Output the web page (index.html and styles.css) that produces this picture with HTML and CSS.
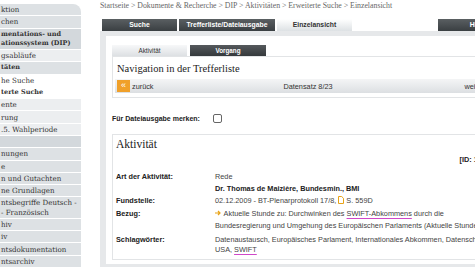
FILE: index.html
```html
<!DOCTYPE html>
<html lang="de">

<head>
    <meta charset="UTF-8">
    <meta name="viewport" content="width=device-width, initial-scale=1.0">
    <title>DIP - Einzelansicht</title>
    <link rel="stylesheet" href="styles.css">
</head>

<body>
    <div class="page">

        <!-- sidebar -->
        <ul class="sidenav">
            <li class="grey">ktion</li>
            <li class="grey">chen</li>
            <li class="dark bold">mentations- und<br>ationssystem (DIP)</li>
            <li class="light">gsabläufe</li>
            <li class="grey bold">täten</li>
            <li class="white">he Suche</li>
            <li class="white bold">terte Suche</li>
            <li class="light">ente</li>
            <li class="light">rung</li>
            <li class="light">.5. Wahlperiode</li>
            <li class="dark">&nbsp;</li>
            <li class="grey">nungen</li>
            <li class="grey">e</li>
            <li class="grey">n und Gutachten</li>
            <li class="grey">ne Grundlagen</li>
            <li class="grey">ntsbegriffe Deutsch -<br>- Französisch</li>
            <li class="grey">hiv</li>
            <li class="grey">iv</li>
            <li class="grey">ntsdokumentation</li>
            <li class="grey">ntsarchiv</li>
        </ul>

        <!-- main -->
        <div class="main">
            <div class="crumbs">Startseite &gt; Dokumente &amp; Recherche &gt; DIP &gt; Aktivitäten &gt; Erweiterte Suche &gt; Einzelansicht</div>

            <div class="tabs">
                <a class="tab tab-dark tab-suche">Suche</a>
                <a class="tab tab-dark tab-treffer">Trefferliste/Dateiausgabe</a>
                <a class="tab tab-light tab-einzel">Einzelansicht</a>
                <a class="tab tab-dark tab-hilfe">Hilfe</a>
            </div>

            <div class="panel">
                <div class="panel-inner">

                    <div class="subtabs">
                        <a class="subtab subtab-light">Aktivität</a>
                        <a class="subtab subtab-dark">Vorgang</a>
                    </div>

                    <div class="navbox">
                        <h2>Navigation in der Trefferliste</h2>
                        <div class="navbar">
                            <span class="nav-back"><span class="arrow-btn">«</span>zurück</span>
                            <span class="nav-count">Datensatz 8/23</span>
                            <span class="nav-next">weiter<span class="arrow-btn">»</span></span>
                        </div>
                    </div>

                    <div class="merken">
                        <label for="merken">Für Dateiausgabe merken:</label>
                        <span class="checkbox" id="merken"></span>
                    </div>

                    <div class="detail">
                        <h2>Aktivität</h2>
                        <div class="detail-id">[ID: 17-23582]</div>
                        <div class="fields">
                            <div class="label">Art der Aktivität:</div>
                            <div class="value">Rede<br><b>Dr. Thomas de Maizière, Bundesmin., BMI</b></div>

                            <div class="label">Fundstelle:</div>
                            <div class="value">02.12.2009 - BT-Plenarprotokoll 17/8,
                                <svg class="doc-icon" width="6" height="8" viewBox="0 0 6 8"><path d="M0.5 0.5h3.2l1.8 1.8v5.2h-5z" fill="#fff" stroke="#e8a317" stroke-width="1"/></svg>
                                S. 559D</div>

                            <div class="label">Bezug:</div>
                            <div class="value value-bezug">
                                <svg class="go-icon" width="6" height="6" viewBox="0 0 6 6"><path d="M0 3h5M3 1l2 2-2 2" fill="none" stroke="#e8a317" stroke-width="1.2"/></svg>
                                Aktuelle Stunde zu: Durchwinken des <span class="hit">SWIFT-Abkommens</span> durch die Bundesregierung und Umgehung des Europäischen Parlaments (Aktuelle Stunde)</div>

                            <div class="label">Schlagwörter:</div>
                            <div class="value value-tight">Datenaustausch, Europäisches Parlament, Internationales Abkommen, Datenschutz, USA, <span class="hit">SWIFT</span></div>
                        </div>
                    </div>

                </div>
            </div>
        </div>
    </div>
</body>

</html>
```

FILE: styles.css
```css
body {
    margin: 0;
    background: #ffffff;
    overflow: hidden;
    color: #444;
}

.page {
    display: flex;
    align-items: flex-start;
}

/* sidebar */
.sidenav {
    list-style: none;
    margin: 4px 0 0 0;
    padding: 0;
    width: 81px;
    flex-shrink: 0;
    border-top-right-radius: 8px;
    overflow: hidden;
    font-family: "DejaVu Serif", serif;
    font-size: 7.1px;
    color: #333;
}

.sidenav li {
    line-height: 9.2px;
    height: 9.2px;
    padding: 1.05px 0 1.05px 1px;
    border-bottom: 1px solid #ffffff;
    white-space: nowrap;
}

.sidenav li:has(br) {
    height: 18.4px;
}

.sidenav .grey {
    background: #dde1e4;
}

.sidenav .dark {
    background: #d3d8dc;
}

.sidenav .light {
    background: #eceef0;
}

.sidenav .white {
    background: #ffffff;
}

.sidenav .bold {
    font-weight: bold;
    font-size: 6.5px;
}

/* main */
.main {
    margin-left: 19px;
    width: 416px;
    flex-shrink: 0;
}

.crumbs {
    font-family: "Liberation Serif", serif;
    font-size: 7.8px;
    color: #666;
    height: 12px;
    line-height: 12px;
    white-space: nowrap;
}

.tabs {
    display: flex;
    gap: 2px;
    padding: 7px 0 0 2px;
}

.tab {
    height: 12px;
    line-height: 12px;
    text-align: center;
    font-family: "Liberation Sans", Arial, sans-serif;
    font-size: 6.8px;
    font-weight: bold;
}

.tab-dark {
    background: linear-gradient(to bottom, #5a5f62, #3a3f42);
    color: #ffffff;
}

.tab-light {
    background: linear-gradient(to bottom, #ffffff, #dde1e4);
    color: #333;
}

.tab-suche {
    width: 75px;
}

.tab-treffer {
    width: 96px;
}

.tab-einzel {
    width: 75px;
}

.tab-hilfe {
    width: 78px;
    margin-left: auto;
}

.panel {
    background: #e6e8ea;
    padding: 5px 6px 30px 6px;
}

.panel-inner {
    background: #ffffff;
    padding: 9px 6px 4px 6px;
}

.subtabs {
    display: flex;
    gap: 3px;
}

.subtab {
    width: 75px;
    height: 11px;
    line-height: 11px;
    text-align: center;
    font-family: "Liberation Sans", Arial, sans-serif;
    font-size: 6.3px;
}

.subtab-light {
    background: linear-gradient(to bottom, #f7f8f9, #dde0e3);
    color: #333;
}

.subtab-dark {
    width: 76px;
    background: linear-gradient(to bottom, #55595c, #35393c);
    color: #fff;
    font-weight: bold;
}

h2 {
    margin: 0;
    font-family: "Liberation Serif", serif;
    font-weight: normal;
    color: #222;
}

.navbox {
    border: 1px solid #e2e4e6;
    padding: 5px 2px 4px 2px;
}

.navbox h2 {
    font-size: 10.5px;
    line-height: 13px;
    padding-left: 2px;
    margin-bottom: 4px;
}

.navbar {
    display: grid;
    grid-template-columns: 1fr auto 1fr;
    align-items: center;
    height: 14px;
    background: linear-gradient(to bottom, #f4f5f6, #dcdfe2);
    font-family: "Liberation Sans", Arial, sans-serif;
    font-size: 7.3px;
    color: #333;
}

.nav-back {
    display: flex;
    align-items: center;
    gap: 2px;
}

.nav-next {
    display: flex;
    align-items: center;
    justify-content: flex-end;
    gap: 2px;
}

.arrow-btn {
    display: inline-block;
    width: 13px;
    height: 12px;
    line-height: 11px;
    margin-left: 2px;
    background: #f0a02a;
    color: #fff;
    font-size: 9px;
    text-align: center;
}

.nav-next .arrow-btn {
    margin: 0 2px 0 0;
}

.merken {
    display: flex;
    align-items: center;
    height: 10px;
    margin: 15px 0 11px 0;
    font-family: "Liberation Sans", Arial, sans-serif;
    font-size: 7px;
    font-weight: bold;
    color: #222;
}

.merken label {
    width: 101px;
}

.checkbox {
    width: 7px;
    height: 7px;
    border: 1px solid #666;
    border-radius: 2px;
    background: #fff;
}

.detail {
    border: 1px solid #e2e4e6;
    padding: 2px 4px 4px 3px;
    font-family: "Liberation Sans", Arial, sans-serif;
    font-size: 7.3px;
    color: #444;
}

.detail h2 {
    font-size: 11.5px;
    line-height: 14px;
}

.detail-id {
    text-align: right;
    font-weight: bold;
    color: #222;
    line-height: 10px;
    margin: 4px -8px 0 0;
}

.fields {
    display: grid;
    grid-template-columns: 99px 1fr;
    row-gap: 1px;
    margin-top: 6px;
    line-height: 11.5px;
}

.label {
    font-weight: bold;
    color: #222;
}

.value b {
    color: #222;
}

.value-bezug {
    line-height: 12.5px;
}

.value-tight {
    line-height: 10px;
    margin-top: 1px;
}

.hit {
    text-decoration: underline;
    text-decoration-color: #d048c8;
    text-underline-offset: 1.5px;
}

.doc-icon {
    vertical-align: -1px;
}

.go-icon {
    vertical-align: 0;
    margin-right: 1px;
}
```
